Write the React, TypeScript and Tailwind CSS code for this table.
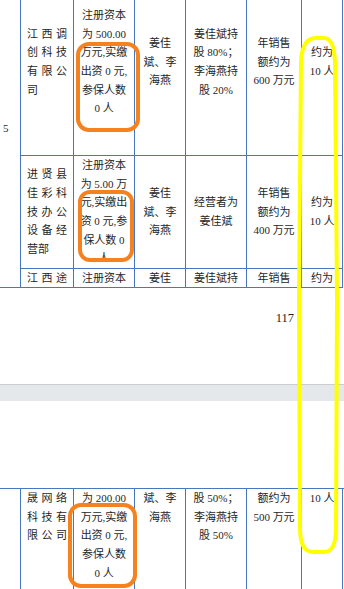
import type { ReactNode } from 'react';

const COLS = 'grid grid-cols-[21px_53px_61px_51px_61px_55px_41px]';
const LINE = 'border-[#4677bf]';

type Kind = 'name' | 'center';

function Cell({
  lines,
  kind = 'center',
  top = false,
  last = true,
}: {
  lines: string[];
  kind?: Kind;
  top?: boolean;
  last?: boolean;
}) {
  return (
    <div
      className={`flex flex-col overflow-hidden border-r ${last ? 'border-b' : ''} ${LINE} ${
        top ? 'justify-start' : 'justify-center'
      } ${kind === 'name' ? 'px-[6px]' : 'items-center px-[2px]'}`}
    >
      {lines.map((line, i) =>
        kind === 'name' ? (
          <div
            key={i}
            className={line.length >= 3 ? 'text-justify [text-align-last:justify]' : 'text-left'}
          >
            {line}
          </div>
        ) : (
          <div key={i} className="whitespace-nowrap">
            {line}
          </div>
        ),
      )}
    </div>
  );
}

function Overlay(): ReactNode {
  return (
    <svg
      className="pointer-events-none absolute inset-0"
      width="344"
      height="589"
      viewBox="0 0 344 589"
      fill="none"
    >
      <g stroke="#f5821f" strokeWidth="4" strokeLinejoin="round">
        <rect x="78" y="44" width="60" height="86" rx="11" />
        <rect x="80" y="192" width="52" height="68" rx="10" />
        <rect x="70" y="505" width="65" height="81" rx="11" />
      </g>
      <path
        d="M299 300 L301 62 Q302 38 316 38 L324 38 Q334 38 335 62 L337 300 L336 528 Q336 552 324 552 L313 552 Q300 552 300 528 Z"
        stroke="#ffff00"
        strokeWidth="4"
        strokeLinejoin="round"
      />
    </svg>
  );
}

export default function App() {
  return (
    <div className="relative h-[589px] w-[344px] overflow-hidden bg-white font-['Liberation_Serif','Noto_Sans_CJK_SC',serif] text-[11px] leading-[18.7px] text-[#1f1f1f]">
      {/* page 117, tail of the table */}
      <div className={`${COLS} -mt-[31px] grid-rows-[187px_113px_19px]`}>
        <div className={`row-span-3 flex items-center border-r border-b pl-[3px] ${LINE}`}>5</div>

        <Cell kind="name" lines={['江西调', '创科技', '有限公', '司']} />
        <Cell lines={['注册资本', '为 500.00', '万元,实缴', '出资 0 元,', '参保人数', '0 人']} />
        <Cell lines={['姜佳', '斌、李', '海燕']} />
        <Cell lines={['姜佳斌持', '股 80%；', '李海燕持', '股 20%']} />
        <Cell lines={['年销售', '额约为', '600 万元']} />
        <Cell lines={['约为', '10 人']} />

        <Cell kind="name" lines={['进贤县', '佳彩科', '技办公', '设备经', '营部']} />
        <Cell lines={['注册资本', '为 5.00 万', '元,实缴出', '资 0 元,参', '保人数 0', '人']} />
        <Cell lines={['姜佳', '斌、李', '海燕']} />
        <Cell lines={['经营者为', '姜佳斌']} />
        <Cell lines={['年销售', '额约为', '400 万元']} />
        <Cell lines={['约为', '10 人']} />

        <Cell top kind="name" lines={['江西途']} />
        <Cell top lines={['注册资本']} />
        <Cell top lines={['姜佳']} />
        <Cell top lines={['姜佳斌持']} />
        <Cell top lines={['年销售']} />
        <Cell top lines={['约为']} />
      </div>

      <div className="h-[96px] pt-[21px] pr-[50px] text-right text-[12.5px]">117</div>

      {/* viewer gap between pages */}
      <div className="h-[17px] border-t border-[#c9ced3] bg-[#e4e8eb]" />

      {/* page 118 */}
      <div className="h-[87px]" />
      <div className={`${COLS} h-[101px] border-t ${LINE}`}>
        <div className={`border-r ${LINE}`} />
        <Cell top last={false} kind="name" lines={['晟网络', '科技有', '限公司']} />
        <Cell top last={false} lines={['为 200.00', '万元,实缴', '出资 0 元,', '参保人数', '0 人']} />
        <Cell top last={false} lines={['斌、李', '海燕']} />
        <Cell top last={false} lines={['股 50%；', '李海燕持', '股 50%']} />
        <Cell top last={false} lines={['额约为', '500 万元']} />
        <Cell top last={false} lines={['10 人']} />
      </div>

      <Overlay />
    </div>
  );
}
